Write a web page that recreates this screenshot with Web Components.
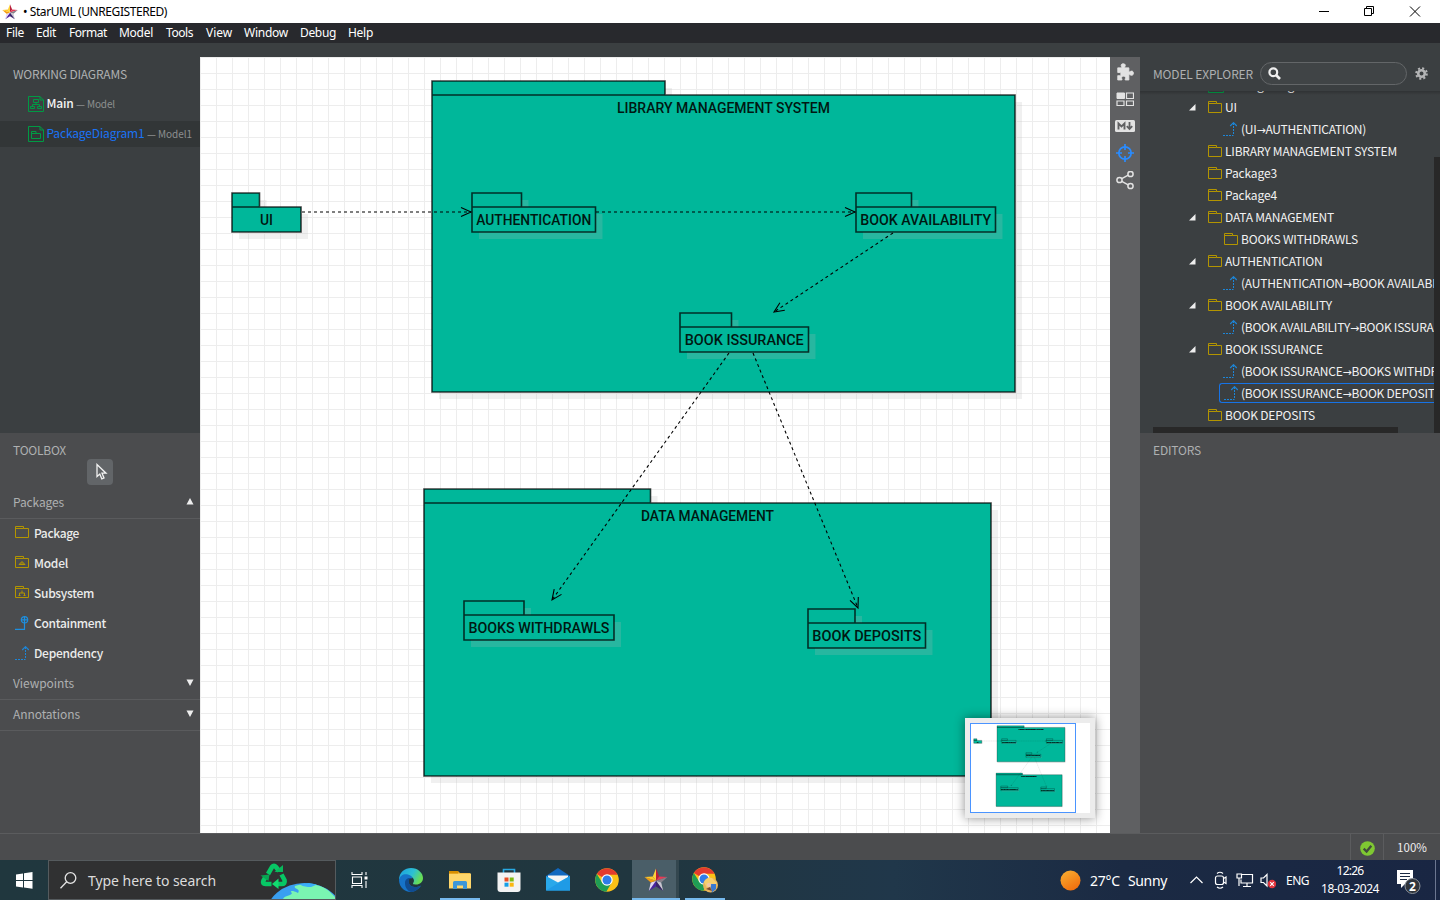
<!DOCTYPE html>
<html lang="en"><head><meta charset="utf-8"><title>StarUML</title>
<style>html,body{margin:0;height:100%;overflow:hidden;background:#3b3f41}</style></head>
<body><star-app></star-app>
<script>
const SRC='"Noto Sans CJK SC","Noto Sans",sans-serif', WIN='"Noto Sans","Open Sans",sans-serif';
const base='*{box-sizing:border-box}svg{display:block;flex:none}';
const def=(name,css,html,init)=>customElements.define(name,class extends HTMLElement{
  connectedCallback(){
    if(this.shadowRoot)return;
    const r=this.attachShadow({mode:'open'});
    r.innerHTML=`<style>${base}${css}</style>${typeof html==='function'?html(this):html}`;
    if(init)init(this,r);
  }
});
const a=(e,n,d='')=>e.getAttribute(n)??d;

/* Text run spaced to a given advance width */
def('fit-text',':host{display:inline-block;white-space:nowrap;flex:none}','<slot></slot>',(e)=>{
  const w=+a(e,'w',0); if(!w)return;
  e.style.letterSpacing='0px';
  const n=e.textContent.length, now=e.getBoundingClientRect().width;
  e.style.letterSpacing=((w-now)/n).toFixed(3)+'px';
});

const folder=(inner='')=>`<svg width="14" height="12" viewBox="0 0 14 12" fill="none" stroke="#b39500" stroke-width="1"><path d="M.5 11.5V.5H8.500V2.500H13.500V11.500ZM.5 2.500H8.500"/>${inner}</svg>`;
const dep=`<svg width="14" height="14" viewBox="0 0 14 14" fill="none" stroke="#1d86d8"><path d="M0 13.500H10.500" stroke-dasharray="2 1"/><path d="M10.500 12V1" stroke-dasharray="2 1"/><path d="M7.200 4 10.500.7 13.800 4" stroke-width="1.200"/></svg>`;
const icons={
 folder:folder(),
 model:folder('<path d="M4 8.500H10L7 5.500Z" fill="#b39500" fill-opacity=".5"/>'),
 subsystem:folder('<path d="M7 4.500V7M4.500 9.500V7H9.500V9.500M3.500 9.500H5.500M8.500 9.500H10.500"/>'),
 dep,
 contain:`<svg width="14" height="14" viewBox="0 0 14 14" fill="none" stroke="#1d8fe0" stroke-width="1.200"><circle cx="9.500" cy="3.800" r="3.200"/><path d="M6.300 3.800H12.700M9.500.6V13.400H0"/></svg>`,
 doc1:`<svg width="16" height="16" viewBox="0 0 16 16" fill="none" stroke="#009a44"><path d="M.5.5H12L15.500 4V15.500H.5ZM12 .5V4H15.500M5.500 3.500H10.500V6.500H5.500ZM2.500 10.500H6.500V12.500H2.500ZM9.500 10.500H13.500V12.500H9.500ZM4.500 10.500V8.500H11.500V10.500M8 6.500V8.500"/></svg>`,
 doc2:`<svg width="16" height="16" viewBox="0 0 16 16" fill="none" stroke="#009a44"><path d="M.5.5H12L15.500 4V15.500H.5ZM12 .5V4H15.500M3.500 12.500V5.500H8V7.500H12.500V12.500ZM3.500 7.500H8"/></svg>`
};
const star=(s)=>`<svg width="${s}" height="${s}" viewBox="0 0 24 24"><path d="M12 .5 8.800 8.400 12 12.800Z" fill="#ffd23b"/><path d="M12 .5 15.200 8.400 12 12.800Z" fill="#b81e3a"/><path d="M23.500 9 15.200 8.400 12 12.800Z" fill="#e63a55"/><path d="M23.500 9 17.200 14.500 12 12.800Z" fill="#85808a"/><path d="M19.200 23 17.200 14.500 12 12.800Z" fill="#c9c5d0"/><path d="M19.200 23 12 18.500V12.800Z" fill="#3a2468"/><path d="M4.800 23 12 18.500V12.800Z" fill="#4a22a0"/><path d="M4.800 23 6.800 14.500 12 12.800Z" fill="#e0d2f4"/><path d="M.5 9 6.800 14.500 12 12.800Z" fill="#f39a12"/><path d="M.5 9 8.800 8.400 12 12.800Z" fill="#ffc928"/></svg>`;

def('title-bar',`:host{display:flex;height:23px;background:#fff;align-items:center;font:12px ${WIN};color:#000;padding-left:2px}svg{margin-right:5px}.sp{flex:1}.c svg{margin:0}`,
`${star(16)}<fit-text w="144">• StarUML (UNREGISTERED)</fit-text><span class="sp"></span>
<div class="c"><svg width="138" height="22" viewBox="0 0 138 22" fill="none" stroke="#000"><path d="M17 10.500H27M62.500 7.500H69.500V14.500H62.500ZM64.500 7.500V5.500H71.500V12.500H69.500"/><path d="M108 5.500 118 15.500M118 5.500 108 15.500"/></svg></div>`);

def('menu-bar',`:host{display:flex;height:20px;background:#28292d;color:#fff;font:12px ${WIN};align-items:center;padding-left:6px}span{display:block;line-height:20px;flex:none}`,
 [['File',18,30],['Edit',20,33],['Format',38,50],['Model',34,47],['Tools',27,40],['View',26,38],['Window',44,56],['Debug',36,48],['Help',25,26]].map(([t,w,c])=>`<span style="width:${c}px"><fit-text w="${w}">${t}</fit-text></span>`).join(''));

def('diagram-entry',`:host{display:flex;align-items:center;height:26px;padding-left:28px;font:12px/26px ${SRC};color:#f4f4f4}:host([on]){background:#323637;color:#1a73f5}svg{margin-right:2.500px;margin-top:-1px}fit-text{margin-top:-2px;font-weight:500}:host([on]) fit-text{font-weight:400}fit-text.s{font-size:10px;font-weight:400;color:#8d8f90;margin:-1px 0 0 2.500px}`,
 e=>`${icons[a(e,'icon')]}<fit-text w="${a(e,'w')}">${a(e,'name')}</fit-text><fit-text class="s" w="${a(e,'sw')}">— ${a(e,'sub')}</fit-text>`);
def('working-diagrams',`:host{display:block;height:376px;background:#3b3f41;font:12px ${SRC};color:#aeb0b1}.h{padding:7px 0 0 13px;line-height:20px;height:34px}diagram-entry+diagram-entry{margin-top:4px}`,
 `<div class="h"><fit-text w="114">WORKING DIAGRAMS</fit-text></div><diagram-entry icon="doc1" name="Main" w="27" sub="Model" sw="39"></diagram-entry><diagram-entry on icon="doc2" name="PackageDiagram1" w="98" sub="Model1" sw="45"></diagram-entry>`);

def('tool-group',`:host{display:flex;height:31px;align-items:center;justify-content:space-between;border-bottom:1px solid #5a5b5d;padding:0 6px 0 13px;color:#aeb0b1;font:12px/30px ${SRC}}svg{margin-top:-4px}fit-text{margin-top:-2px}`,
 e=>`<fit-text w="${a(e,'w')}">${a(e,'name')}</fit-text><svg width="8" height="7"><path d="${e.hasAttribute('up')?'M4 0 7.500 6.500H.5Z':'M.5 .5H7.500L4 7Z'}" fill="#eee"/></svg>`);
def('tool-item',`:host{display:flex;height:30px;align-items:center;padding-left:15px;color:#ececec;font:500 12px/30px ${SRC}}.i{width:19px;height:15px;flex:none;margin-top:-2px}fit-text{margin-top:-2px}`,
 e=>`<span class="i">${icons[a(e,'icon')]}</span><fit-text w="${a(e,'w')}">${a(e,'name')}</fit-text>`);
def('tool-box',`:host{display:block;flex:1;background:#4b4c4e;font:12px ${SRC};color:#aeb0b1}.h{padding:7px 0 0 13px;line-height:19px;height:26px}.b{width:26px;height:26px;margin:0 auto 3px 87px;border-radius:4px;background:#626568;display:flex;align-items:center;justify-content:center;padding-left:2px}`,
 `<div class="h"><fit-text w="53">TOOLBOX</fit-text></div><div class="b"><svg width="13" height="18" viewBox="0 0 13 18"><path d="M2 1.500V13.500L4.800 11 6.800 15.800 9 14.900 7 10.200H11Z" fill="none" stroke="#f2f2f2" stroke-width="1.300"/></svg></div>
 <tool-group up name="Packages" w="51"></tool-group>
 <tool-item icon="folder" name="Package" w="45"></tool-item><tool-item icon="model" name="Model" w="34"></tool-item><tool-item icon="subsystem" name="Subsystem" w="60"></tool-item><tool-item icon="contain" name="Containment" w="72"></tool-item><tool-item icon="dep" name="Dependency" w="69"></tool-item>
 <tool-group name="Viewpoints" w="61"></tool-group><tool-group name="Annotations" w="67"></tool-group>`);

/* Diagram model, in canvas coordinates: x, y, tab width, width, body height, label, label width */
const packs=[[232,24,233,583,297,'LIBRARY MANAGEMENT SYSTEM',213],[32,136,27.500,69,25,'UI',13],[224,432,226.500,567,273,'DATA MANAGEMENT',133],[272,136,49.500,123.500,25,'AUTHENTICATION',115],[656,136,55.500,139.500,25,'BOOK AVAILABILITY',131],[480,256,51.500,128.500,25,'BOOK ISSURANCE',119],[264,544,60,150,25,'BOOKS WITHDRAWLS',141],[608,552,47,117.500,25,'BOOK DEPOSITS',109]];
const edges=[[102,155,271,155],[396,155,655,155],[693,176,574,255],[529,296,352,543],[553,296,658,551]];
const drawing=()=>packs.map(([x,y,t,w,h,s,l])=>`<g><path class="sh" d="M${x+7} ${y+7}h${t}v14h${w-t}v${h}h${-w}Z" fill="rgb(182,182,182)" fill-opacity=".21"/>
<path class="pk" d="M${x} ${y}h${t}v14h${-t}ZM${x} ${y+14}h${w}v${h}h${-w}Z"/>
<text x="${x+w/2-l/2}" y="${y+32.4}" textLength="${l}" lengthAdjust="spacingAndGlyphs">${s}</text></g>`).join('')+
edges.map(([p,q,r,s])=>{const t=Math.atan2(s-q,r-p),L=11,k=.42;const f=m=>`${(r-L*Math.cos(t+m)).toFixed(1)} ${(s-L*Math.sin(t+m)).toFixed(1)}`;
return `<path d="M${p} ${q}L${r} ${s}" fill="none" stroke="#000" stroke-width="1.100" stroke-dasharray="3 3"/><path d="M${f(k)}L${r} ${s}L${f(-k)}" fill="none" stroke="#000" stroke-width="1.100"/>`}).join('');
def('mini-map',`:host{display:block;width:130px;height:100px;padding:5px;background:#ececec;box-shadow:0 0 10px rgba(0,0,0,.45)}div{background:#fff;height:90px}svg{outline:1px solid #4a94ff;outline-offset:-1px}text{font:500 14px Roboto,sans-serif;stroke:#000;stroke-width:1}.pk{fill:#00b79a;stroke:#000;stroke-opacity:.3;stroke-width:7}`,
 `<div><svg width="106" height="90" viewBox="0 0 910 776" preserveAspectRatio="none">${drawing()}</svg></div>`);
def('diagram-canvas',`:host{display:block;position:relative;width:910px;height:776px;background:#fff;flex:none}mini-map{position:absolute;left:765px;top:661px}text{font:500 14px Roboto,"Liberation Sans",sans-serif;fill:#001812}.pk{fill:#00b79a;stroke:#000;stroke-opacity:.75;stroke-width:1.600}`,
 `<svg width="910" height="776"><defs><pattern id="g" width="16" height="16" patternUnits="userSpaceOnUse"><path d="M.5 0V16M0 .5H16" stroke="#ededed" fill="none"/></pattern></defs><rect width="910" height="776" fill="url(#g)"/>${drawing()}</svg><mini-map></mini-map>`);

def('side-tools',`:host{display:flex;flex-direction:column;width:30px;background:#5f6062;align-items:center;padding-top:6px;gap:9px;flex:none}`,
`<svg width="19" height="18" viewBox="0 0 19 18.500" fill="#e2e2e2"><path d="M1.500 5H5.500C6 4 4.800 3.500 5 2 5.300.3 9 .3 9.300 2 9.500 3.500 8.200 4 8.700 5H13V9C14 9.500 14.500 8.200 16 8.300 18.300 8.500 18.300 12.500 16 12.700 14.500 12.800 14 11.500 13 12V17.500H9.200C8.700 16.500 9.700 16 9.500 15 9.200 13.200 5.800 13.200 5.500 15 5.300 16 6.300 16.500 5.800 17.500H1.500V13C2.500 12.500 3 13.500 4 13 5 12.200 5 10.500 4 9.800 3 9.300 2.500 10.300 1.500 9.800Z" stroke="#e2e2e2" stroke-width=".8"/></svg>
<svg width="18" height="18" viewBox="0 0 18 18" fill="none" stroke="#e2e2e2"><path d="M1 3H8.500V8.500H1Z" fill="#e2e2e2"/><path d="M10.500 3H17.500V8.500H10.500ZM1 11H8V15.500H1ZM10.500 11H17.500V15.500H10.500Z" stroke-width="1.200"/></svg>
<svg width="20" height="18" viewBox="0 0 20 18"><rect x="0" y="3" width="20" height="12" rx="1.500" fill="#e2e2e2"/><path d="M3.500 12.500V6.500L6.500 9.500 9.500 6.500V12.500" fill="none" stroke="#5f6062" stroke-width="1.900"/><path d="M14.500 5V11M11.800 9.200 14.500 12 17.200 9.200" fill="none" stroke="#5f6062" stroke-width="1.800"/></svg>
<svg width="18" height="18" viewBox="0 0 18 18" fill="none" stroke="#2a8cff" stroke-width="1.700"><circle cx="9" cy="9" r="6.200"/><path d="M9 0V6M9 12V18M0 9H6M12 9H18"/></svg>
<svg width="18" height="19" viewBox="0 0 18 19" fill="none" stroke="#e2e2e2" stroke-width="1.500"><circle cx="3.500" cy="9" r="2.600"/><circle cx="14.500" cy="3" r="2.600"/><circle cx="14.500" cy="15" r="2.600"/><path d="M5.800 7.700 12.200 4.200M5.800 10.300 12.200 13.800"/></svg>`);

def('tree-row',`:host{display:flex;height:22px;align-items:center;font:12px/22px ${SRC};color:#f2f2f2;flex:none;padding-left:49px}:host([lv="2"]){padding-left:84px}.a{width:19px;flex:none}.n{width:17px;flex:none}.n svg{margin-top:0}:host([icon="dep"]){padding-left:83px}:host([icon="dep"]) .n{width:18px}:host([sel]){margin-left:79px;padding-left:4px;border:1px solid #1673e6;border-right:0;border-radius:3px 0 0 3px;height:20px;margin-top:1px;margin-bottom:1px;line-height:20px}:host([sel]) .n{width:17px}.r{font:11px/1 "DejaVu Sans",sans-serif}`,
 e=>`${a(e,'lv')==='2'?'':`<span class="a">${e.hasAttribute('open')?'<svg width="7" height="7"><path d="M6.500 0V6.500H0Z" fill="#eee"/></svg>':''}</span>`}<span class="n">${icons[a(e,'icon','folder')]}</span><fit-text w="${a(e,'w')}">${a(e,'name').replace('→','<span class="r">→</span>')}</fit-text>`);
def('model-tree',`:host{display:block;height:342px;overflow:hidden;position:relative;background:#3b3f41}.l{display:flex;flex-direction:column;margin-top:-17px;width:294px;overflow:hidden;height:353px}.v{position:absolute;right:0;top:66px;width:6px;height:276px;background:#282828}.hz{position:absolute;left:13px;bottom:0;width:245px;height:6px;background:#282828}.s{position:absolute;left:0;right:0;top:0;height:4px;background:linear-gradient(#0003,#0000)}`,
 `<div class="l"><tree-row icon="doc2" w="97" name="PackageDiagram1"></tree-row>`+[['UI',12,1],['(UI→AUTHENTICATION)',125,2],['LIBRARY MANAGEMENT SYSTEM',172],['Package3',52],['Package4',52],['DATA MANAGEMENT',109,1],['BOOKS WITHDRAWLS',117,3],['AUTHENTICATION',97.500,1],['(AUTHENTICATION→BOOK AVAILABILITY)',221,2],['BOOK AVAILABILITY',107,1],['(BOOK AVAILABILITY→BOOK ISSURANCE)',219,2],['BOOK ISSURANCE',98,1],['(BOOK ISSURANCE→BOOKS WITHDRAWLS)',231,2],['(BOOK ISSURANCE→BOOK DEPOSITS)',204,4],['BOOK DEPOSITS',90]].map(([n,w,k])=>`<tree-row name="${n}" w="${w}" ${k===1?'open':''} ${k>1?'lv="2"':''} ${k===2||k===4?'icon="dep"':''} ${k===4?'sel':''}></tree-row>`).join('')+`</div><i class="v"></i><i class="hz"></i><i class="s"></i>`);
def('model-explorer',`:host{display:flex;flex-direction:column;width:300px;background:#4b4c4e;flex:none;color:#aeb0b1;font:12px ${SRC}}.h{height:34px;display:flex;align-items:center;padding:0 0 2px 13px;background:#3b3f41}.q{width:147px;height:23px;border:1px solid #636668;border-radius:12px;background:#404446;margin:0 8px 0 7px;display:flex;align-items:center;padding-left:7px}.e{padding:7px 13px;line-height:19px}`,
`<div class="h"><fit-text w="100">MODEL EXPLORER</fit-text><div class="q"><svg width="13" height="13" viewBox="0 0 13 13" fill="none" stroke="#eee"><circle cx="5.300" cy="5.300" r="3.900" stroke-width="2.200"/><path d="M8 8 12 12" stroke-width="2.600"/></svg></div><svg width="13" height="13" viewBox="0 0 13 13" fill="none" stroke="#b4b5b6"><circle cx="6.500" cy="6.500" r="3.300" stroke-width="2.600"/><circle cx="6.500" cy="6.500" r="5.300" stroke-width="2" stroke-dasharray="2.081 2.081"/></svg></div><model-tree></model-tree><div class="e"><fit-text w="48">EDITORS</fit-text></div>`);

def('status-bar',`:host{display:flex;height:27px;background:#4b4c4e;border-top:1px solid #5b5c5e;justify-content:flex-end;color:#eee;font:11.500px/27px ${SRC}}div{width:33px;border-left:1px solid #5b5c5e;display:flex;align-items:center;justify-content:center;padding-top:2px}.z{width:57px;padding:0}`,
`<div><svg width="15" height="15"><circle cx="7.500" cy="7.500" r="7.300" fill="#7fc832"/><path d="M3.700 7.700 6.600 10.500 11.300 4.800" fill="none" stroke="#414a3c" stroke-width="2.300"/></svg></div><div class="z"><fit-text w="30">100%</fit-text></div>`);

const chrome=`<circle cx="12" cy="12" r="11.800" fill="#fbc116"/><path d="M12 12 1.800 6.100A11.800 11.800 0 0 1 22.200 6.100L22 6.700H12Z" fill="#e33b2e"/><path d="M1.800 6.100A11.800 11.800 0 0 0 11.300 23.800L16.500 14.700 12 12 7.300 14.700Z" fill="#1f9d55"/><circle cx="12" cy="12" r="5.700" fill="#fff"/><circle cx="12" cy="12" r="4.500" fill="#2f7de9"/>`;
const svg24=(b,s=24)=>`<svg width="${s}" height="${s}" viewBox="0 0 24 24">${b}</svg>`;
const apps={
 edge:svg24(`<defs><linearGradient id="e" x1="0" y1="0" x2="1" y2=".4"><stop offset="0" stop-color="#1c9fe0"/><stop offset=".6" stop-color="#2cc0d4"/><stop offset="1" stop-color="#67dd55"/></linearGradient></defs><path d="M0 12C0 4 6 0 12 0 19 0 24 5 24 10 24 14 21 16.500 17 16.500 14 16.500 13.500 15.500 14.500 14.500 16 12 14 8.500 10 8.500 5 8.500 1 10 0 12Z" fill="url(#e)"/><path d="M0 12C1 7 5 5.500 9 6.500 12.500 7.500 14 9.500 13 10.500 9 9 8 15 12 18 15 20 19 19 22 17.500 18 24 10 26 4.500 21.500 1.500 19 0 15.500 0 12Z" fill="#1673c8"/><path d="M6 15C6 11 9 9.500 12 10 9 11 9 15.500 12 18 15 20 19 19 22 17.500 19 22 15 24 12 24 9 23 6 20 6 15Z" fill="#104c91"/>`),
 files:svg24(`<path d="M1 3H10L12 5H22V20H1Z" fill="#e7a320"/><path d="M1 5.500H23V20.500H1Z" fill="#ffd76b"/><path d="M1 3H10V5.500H1Z" fill="#d99000"/><path d="M5 21V14.500Q5 13 6.500 13H17.500Q19 13 19 14.500V21H15V17.500H9V21Z" fill="#3d97d8"/>`),
 store:svg24(`<path d="M6.500 5V1.500H17.500V5" fill="none" stroke="#27a9e3" stroke-width="1.600"/><path d="M.5 4.500H23.500V21Q23.500 24 20.500 24H3.500Q.5 24 .5 21Z" fill="#f3f3f3"/><path d="M7.500 9.500H11.500V13.500H7.500Z" fill="#e84f25"/><path d="M12.700 9.500H16.700V13.500H12.700Z" fill="#7dba12"/><path d="M7.500 14.700H11.500V18.700H7.500Z" fill="#159fe6"/><path d="M12.700 14.700H16.700V18.700H12.700Z" fill="#fab710"/>`),
 mail:svg24(`<path d="M0 8 12 0 24 8V14H0Z" fill="#1168bf"/><path d="M2 7.500H22V15H2Z" fill="#f4f4f4"/><path d="M0 8 12 14.500 24 8V22.500H0Z" fill="#29a8ea"/><path d="M0 22.500 24 8V22.500Z" fill="#1f9be6"/>`),
 chrome:svg24(chrome), star:star(24),
 chrome2:`<svg width="28" height="26" viewBox="0 0 28 26" style="margin-left:3px">${chrome}<circle cx="18.500" cy="18" r="7.500" fill="#e8b45c"/><path d="M12 15Q15 10 20 11L25 16 22 20Q17 14 15 21Z" fill="#f6cf6d"/><path d="M18 17H24V22L20 25.500Z" fill="#3979d0"/><circle cx="17" cy="18" r="2.200" fill="#f3c8a4"/><path d="M14 22 18 20 20 24Z" fill="#7b4932"/></svg>`};
def('task-app',`:host{display:flex;width:49px;height:40px;align-items:center;justify-content:center;flex:none;border-bottom:0 solid #76b9ed}:host([run]){width:40px;margin:0 4.500px;padding-top:2px;border-bottom-width:2px}:host([act]){width:48px;margin:0 0 0 1px;background:linear-gradient(90deg,#4a5e68 44px,#34474f 44px,#34474f 47px,#0000 47px);padding-top:2px;border-bottom-width:2px}`,e=>apps[a(e,'app')]);
def('search-box',`:host{display:flex;position:relative;width:288px;height:40px;background:#303132;border:1px solid #555b5e;align-items:center;color:#dcdcdc;font:14px ${WIN};padding-left:11px;overflow:hidden;flex:none}.p{position:absolute;right:0;top:0}fit-text{margin-left:11px}`,
`<svg width="17" height="17" viewBox="0 0 17 17" fill="none" stroke="#e4e4e4" stroke-width="1.300"><circle cx="10.500" cy="6" r="5.300"/><path d="M6.700 9.800.5 16.300"/></svg><fit-text w="128">Type here to search</fit-text>
<svg class="p" width="80" height="38" viewBox="0 0 80 38"><g transform="translate(1.500 -1)"><g fill="none" stroke="#07c765" stroke-width="4.600"><path d="M11.500 14 15.500 7Q17.500 4.500 19.500 7L22.500 11"/><path d="M25 14.500 28 20Q29 24 25 24H20"/><path d="M15 24H9Q5.500 24 7 20.500L9 17"/></g><path d="M18 12H26.500V5Z" fill="#08b95c"/><path d="M22 18.500V29L15.500 24Z" fill="#12dd70"/><path d="M4 15.500 13 14.500 12 21Z" fill="#08a552"/></g><ellipse cx="49.500" cy="55.500" rx="39" ry="33.500" fill="#399ff0"/><path d="M40 25C50 21 66 23 74 30L82 38H28C30 34 36 35 37 32 34 30 37 29 43 32 46 27 38 28 40 25Z" fill="#7af5b2"/><path d="M44 23Q52 29 62 23.400L54 22Z" fill="#39aef8"/></svg>`);
def('task-bar',`:host{display:flex;height:40px;background:linear-gradient(90deg,#20373e 0,#20363f 45%,#20374a 62%,#1b2a43 78%,#192643 100%);color:#fff;font:12px ${WIN};align-items:stretch}.st{width:48px;display:flex;align-items:center;justify-content:center}.tv{width:50px;display:flex;align-items:center;justify-content:center;padding-right:3px}.sp{flex:1}.tr{display:flex;align-items:center;width:376px;border-right:1px solid #6b7690}.w{font-size:14px;margin-left:9px}.w2{font-size:14px;margin-left:8px}.d{display:flex;flex-direction:column;align-items:center;line-height:18px;width:60px;margin-left:11px}.e{width:4px}`,
`<div class="st"><svg width="17" height="17" fill="#fff"><path d="M0 2.500 7 1.500V8H0ZM8 1.300 16.500 0V8H8ZM0 9H7V15.400L0 14.400ZM8 9H16.500V16.700L8 15.600Z"/></svg></div><search-box></search-box>
<div class="tv"><svg width="17" height="17" fill="none" stroke="#fff"><path d="M1 0V2.500H11V0M1 16V13.500H11V16M1.500 5H10.500V11.500H1.500ZM15 0V3M15 9V16" stroke-width="1.100"/><path d="M13.500 4.500H16.500V7.500H13.500Z" fill="#fff" stroke="none"/></svg></div>
<task-app app="edge"></task-app><task-app run app="files"></task-app><task-app app="store"></task-app><task-app app="mail"></task-app><task-app app="chrome"></task-app><task-app act app="star"></task-app><task-app run app="chrome2"></task-app><span class="sp"></span>
<div class="tr"><svg width="21" height="21"><defs><linearGradient id="s" x2=".6" y2="1"><stop stop-color="#f9b233"/><stop offset="1" stop-color="#f2700f"/></linearGradient></defs><circle cx="10.500" cy="10.500" r="10" fill="url(#s)"/></svg><fit-text class="w" w="30">27°C</fit-text><fit-text class="w2" w="39">Sunny</fit-text>
<svg style="margin-left:23px" width="86" height="22" viewBox="0 0 86 22" fill="none" stroke="#fff" stroke-width="1.200"><path d="M.5 14 6.500 8 12.500 14"/><rect x="25.500" y="7" width="8" height="8.500" rx="2"/><path d="M33.500 9.500 36 8V14.500L33.500 13M27 4.500Q30 2 33 4.500M27 18Q30 20.500 33 18"/><path d="M52 5.500H62.500V14H51V10.500M57 14V17.500M53 17.500H61"/><path d="M47 5H51.500V9H47ZM49 9V17"/><path d="M71 9H73.500L77 5.500V17L73.500 13.500H71Z"/><circle cx="82" cy="15" r="4.200" fill="#e2343d" stroke="none"/><path d="M80.200 13.200 83.800 16.800M83.800 13.200 80.200 16.800" stroke-width="1.100"/></svg>
<fit-text style="margin-left:10px" w="23">ENG</fit-text><div class="d"><fit-text w="27">12:26</fit-text><fit-text w="58">18-03-2024</fit-text></div>
<svg style="margin-left:16px" width="26" height="28" viewBox="0 0 26 28"><path d="M1 4H17V18H9L5 22V18H1Z" fill="#fff"/><path d="M4 7.500H14M4 10.500H14M4 13.500H11" stroke="#1a2943"/><circle cx="16.500" cy="20" r="7.500" fill="#30353c" stroke="#8b929b"/><text x="16.500" y="24.500" font-size="12" font-weight="bold" text-anchor="middle" fill="#fff" font-family="Noto Sans, sans-serif">2</text></svg></div><span class="e"></span>`);
def('star-app',`:host{display:flex;flex-direction:column;width:1440px;height:900px;overflow:hidden}.strip{height:14px;background:#3b3f41}.m{display:flex;height:776px}.l{display:flex;flex-direction:column;width:200px;flex:none}`,
`<title-bar></title-bar><menu-bar></menu-bar><div class="strip"></div><div class="m"><div class="l"><working-diagrams></working-diagrams><tool-box></tool-box></div><diagram-canvas></diagram-canvas><side-tools></side-tools><model-explorer></model-explorer></div><status-bar></status-bar><task-bar></task-bar>`);
</script></body></html>
